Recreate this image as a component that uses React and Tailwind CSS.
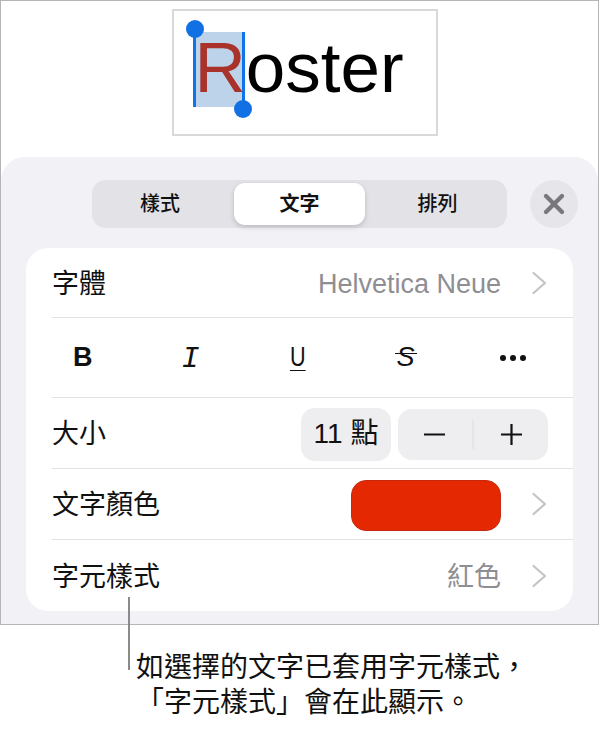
import React from "react";
import { X } from "lucide-react";

const CJK = "font-['Liberation_Sans','Noto_Sans_CJK_TC',sans-serif]";

const Chevron = () => (
  <svg width="16" height="24" viewBox="0 0 16 24" fill="none" className="shrink-0">
    <path d="M2.5 2 L14 12 L2.5 22" stroke="#c4c4c7" strokeWidth="2.2" strokeLinecap="round" strokeLinejoin="round" />
  </svg>
);

const Row = ({ label, children, height = "h-[71px]", last }) => (
  <div className={`ml-[26px] flex items-center justify-between pr-[26px] ${height} ${last ? "" : "border-b border-[#e3e3e6]"}`}>
    <span className="pt-[3px] text-[27px] text-[#111]">{label}</span>
    <div className="flex items-center">{children}</div>
  </div>
);

export default function App() {
  return (
    <div className={`${CJK} relative h-[729px] w-[599px] overflow-hidden bg-white`}>
      {/* slide preview */}
      <div className="h-[625px] border border-[#b5b5b8] bg-white">
        <div className="flex h-[156px] justify-center pt-[8px]">
          <div className="relative ml-[10px] h-[127px] w-[266px] border-2 border-[#d9d9d9] pl-[21px] pt-[21px]">
            <div className="absolute left-[19px] top-[21px] h-[75px] w-[52px] border-x-[3px] border-[#0f74e6] bg-[#bcd3ea]" />
            <span className="relative text-[71px] leading-none text-black">
              <span className="text-[#a9322b]">R</span>oster
            </span>
            <div className="absolute left-[12px] top-[9px] h-[18px] w-[18px] rounded-full bg-[#1170e4]" />
            <div className="absolute left-[60px] top-[89px] h-[18px] w-[18px] rounded-full bg-[#1170e4]" />
          </div>
        </div>

        {/* format panel */}
        <div className="h-[467px] rounded-t-[24px] bg-[#f1f1f6] pt-[23px]">
          <div className="ml-[91px] flex items-center gap-[23px]">
            <div className="flex h-[48px] w-[415px] items-center rounded-[14px] bg-[#e2e2e7] p-[3px] text-[20px] text-[#111]">
              <span className="w-[139px] shrink-0 pr-[9px] text-center font-medium">樣式</span>
              <span className="flex h-[42px] w-[131px] shrink-0 items-center justify-center rounded-[11px] bg-white font-bold shadow-[0_2px_5px_rgba(0,0,0,0.18)]">文字</span>
              <span className="w-[139px] shrink-0 pl-[6px] text-center font-medium">排列</span>
            </div>
            <div className="flex h-[48px] w-[48px] items-center justify-center rounded-full bg-[#e5e5ea]">
              <X size={32} strokeWidth={3.2} className="text-[#77777c]" />
            </div>
          </div>

          <div className="mx-[25px] mt-[20px] h-[363px] rounded-[22px] bg-white">
            <Row label="字體" height="h-[70px]">
              <span className="mr-[30px] pt-[3px] text-[27px] text-[#8e8e93]">Helvetica Neue</span>
              <Chevron />
            </Row>

            <div className="ml-[26px] h-[80px] border-b border-[#e3e3e6] text-[#111]">
              <div className="-ml-[23px] grid h-full w-[538px] grid-cols-5 items-center justify-items-center">
                <span className="text-[27px] font-bold">B</span>
                <span className="pt-[4px] font-['Liberation_Mono'] text-[30px] italic">I</span>
                <span className="inline-block scale-x-[0.8] text-[27px] underline decoration-1 underline-offset-[4px]">U</span>
                <span className="relative text-[27px] italic">
                  S
                  <i className="absolute -left-[2px] -right-[2px] top-[16px] h-px bg-[#111]" />
                </span>
                <span className="flex gap-[4px]">
                  <i className="h-[6px] w-[6px] rounded-full bg-[#111]" />
                  <i className="h-[6px] w-[6px] rounded-full bg-[#111]" />
                  <i className="h-[6px] w-[6px] rounded-full bg-[#111]" />
                </span>
              </div>
            </div>

            <Row label="大小">
              <div className="-mr-px mt-[2px] flex items-center">
                <div className="flex h-[53px] w-[90px] items-center justify-center rounded-[14px] bg-[#eeeef0] text-[28px] text-[#111]">11 點</div>
                <div className="ml-[7px] flex h-[51px] w-[150px] items-center rounded-[14px] bg-[#eeeef0]">
                  <svg width="150" height="51" viewBox="0 0 150 51" fill="none">
                    <path d="M26 25.5 H47 M103 25.5 H124 M113.5 15 V36" stroke="#111" strokeWidth="2.2" />
                    <path d="M75 11 V40" stroke="#dcdcdf" strokeWidth="1" />
                  </svg>
                </div>
              </div>
            </Row>

            <Row label="文字顏色">
              <div className="mr-[30px] mt-[2px] h-[51px] w-[150px] rounded-[15px] border border-[#c42a10] bg-[#e32802]" />
              <Chevron />
            </Row>

            <Row label="字元樣式" last>
              <span className="mr-[30px] pt-[3px] text-[27px] text-[#8e8e93]">紅色</span>
              <Chevron />
            </Row>
          </div>
        </div>
      </div>

      {/* callout */}
      <div className="absolute left-[128px] top-[597px] h-[73px] w-[2px] bg-[#8a8a8a]" />
      <div className="absolute left-[136px] top-[650px] text-[28px] leading-[35px] whitespace-nowrap text-[#111]">
        <div>如選擇的文字已套用字元樣式，</div>
        <div>「字元樣式」會在此顯示。</div>
      </div>
    </div>
  );
}
